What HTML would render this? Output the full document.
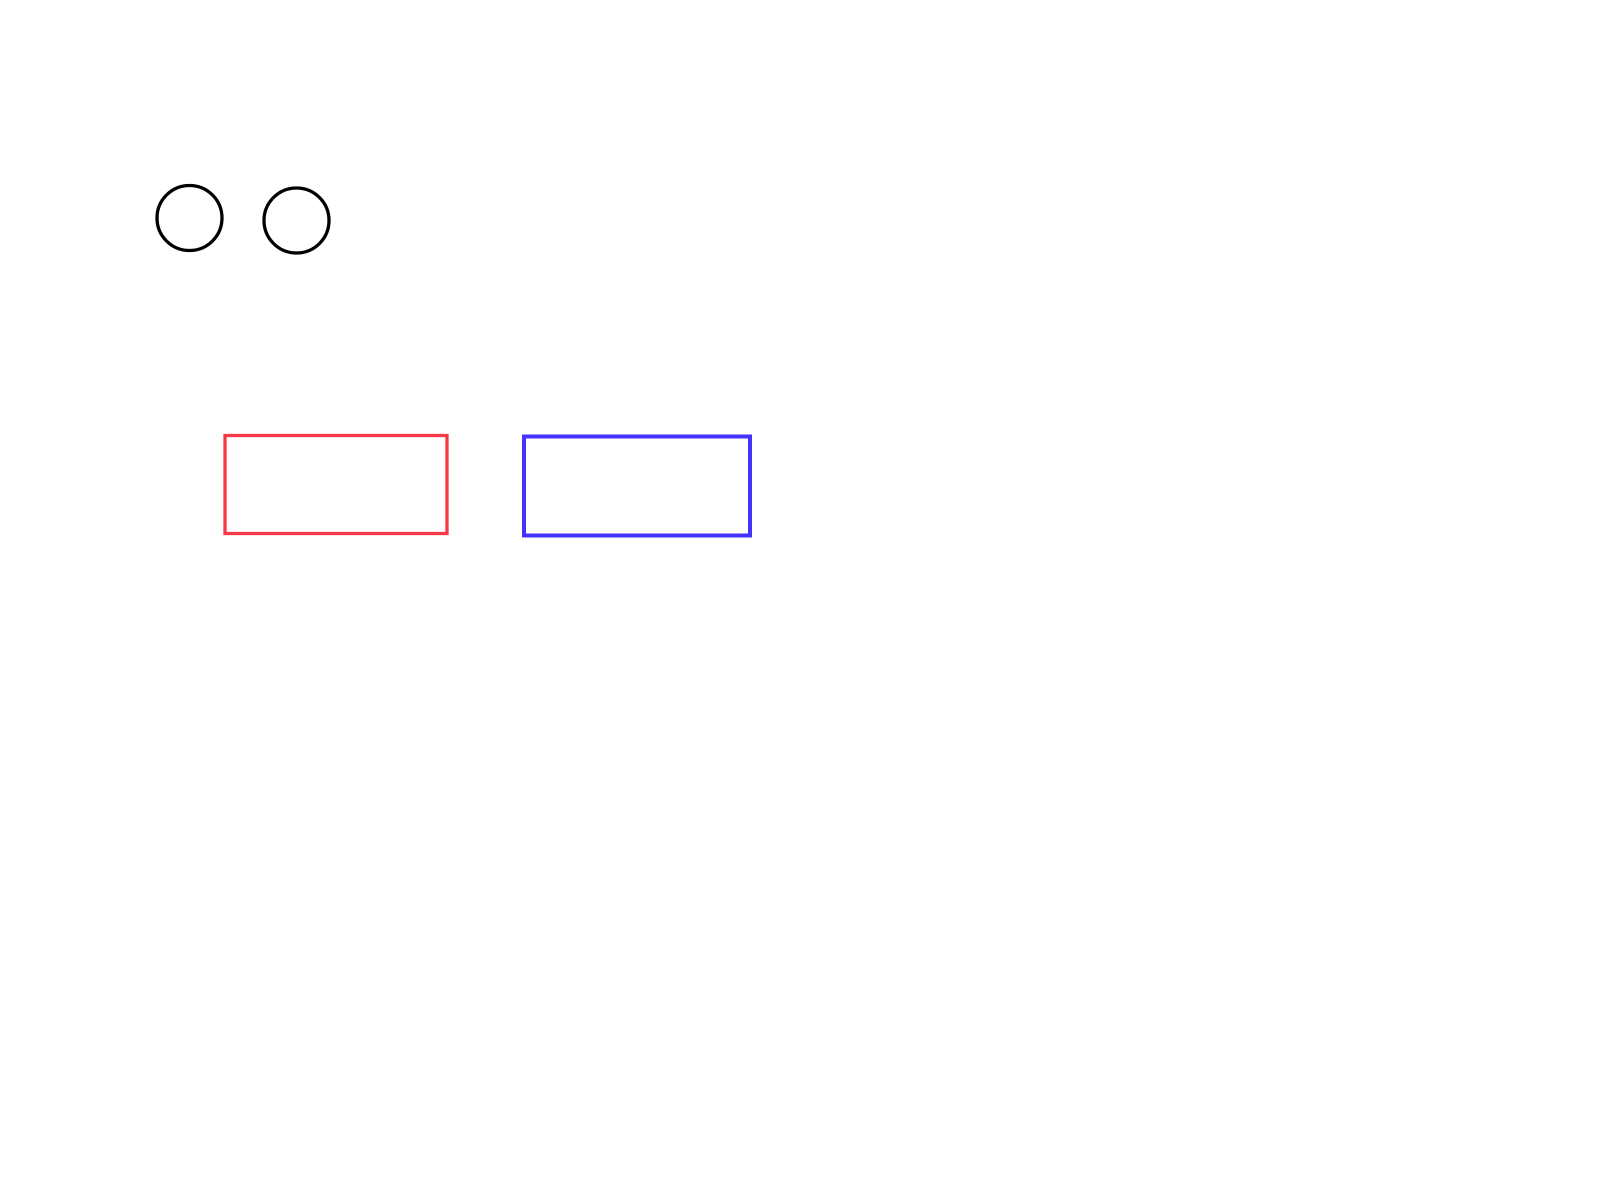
<!DOCTYPE html>
<html><head><meta charset="utf-8"><style>
html,body{margin:0;padding:0;background:#fff;width:1600px;height:1200px;overflow:hidden}
</style></head><body>
<svg width="1600" height="1200" viewBox="0 0 1600 1200" xmlns="http://www.w3.org/2000/svg">
<circle cx="189.5" cy="218" r="32.5" fill="none" stroke="#000" stroke-width="3.3"/>
<circle cx="296.5" cy="220.5" r="32.5" fill="none" stroke="#000" stroke-width="3.3"/>
<rect x="225" y="435.5" width="222" height="98" fill="none" stroke="#f43847" stroke-width="3.3"/>
<rect x="524" y="436.5" width="226" height="99" fill="none" stroke="#4433ff" stroke-width="4"/>
</svg>
</body></html>
